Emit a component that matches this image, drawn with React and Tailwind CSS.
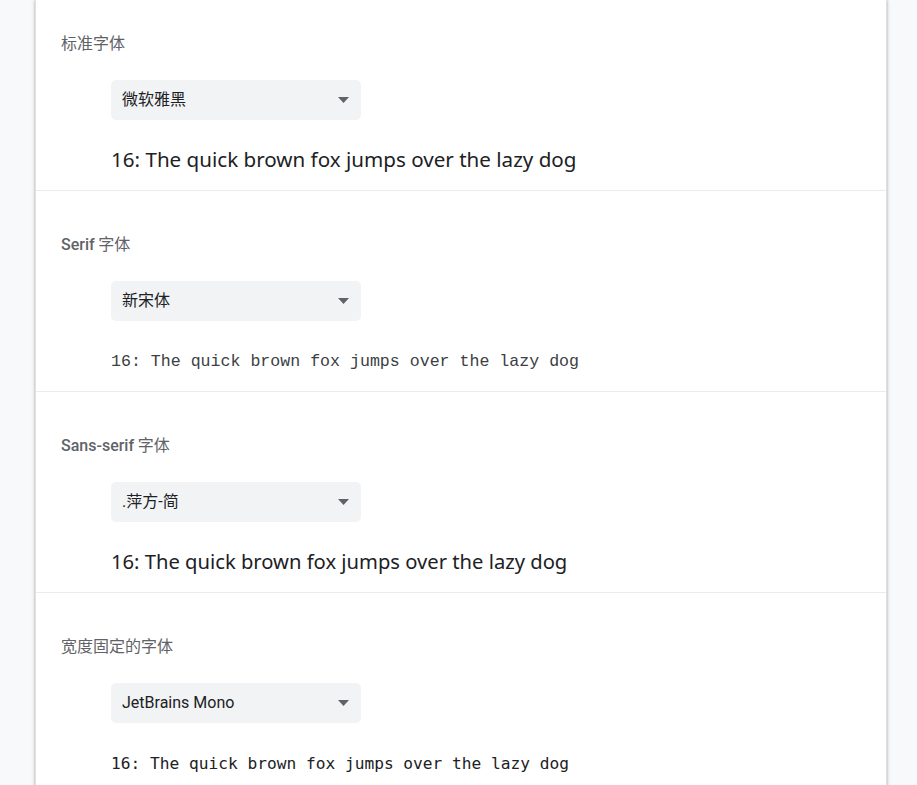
const fontRows = [
  {
    label: '标准字体',
    value: '微软雅黑',
    sampleClass: "mt-[27px] pb-[19px] font-['Noto_Sans','Noto_Sans_CJK_SC',sans-serif] text-[20.6px] text-[#202124]",
  },
  {
    label: 'Serif 字体',
    latin: 'Serif',
    value: '新宋体',
    sampleClass: "mt-[29px] pb-[17px] font-['Liberation_Mono','Noto_Sans_CJK_SC',monospace] text-[16.6px] text-[#3c4043]",
  },
  {
    label: 'Sans-serif 字体',
    latin: 'Sans-serif',
    value: '.萍方-简',
    sampleClass: "mt-[27px] pb-[19px] font-['Noto_Sans','Noto_Sans_CJK_SC',sans-serif] text-[20.2px] text-[#202124]",
  },
  {
    label: '宽度固定的字体',
    value: 'JetBrains Mono',
    sampleClass: "mt-[29px] pb-[17px] font-['DejaVu_Sans_Mono',monospace] text-[16.2px] text-[#202124]",
  },
];

function Label({ row }) {
  if (!row.latin) return <span>{row.label}</span>;
  return (
    <span>
      <span className="font-['Roboto',sans-serif] font-medium">{row.latin}</span>
      {row.label.slice(row.latin.length)}
    </span>
  );
}

function FontRow({ row, first }) {
  return (
    <section className={`${first ? 'pt-[32px]' : 'pt-[42px]'} border-b border-[#ebebeb]`}>
      <div className="pl-[25px] h-[20px] leading-[20px] text-[16px] text-[#5f6368]">
        <Label row={row} />
      </div>
      <div className="pl-[75px] mt-[28px]">
        <div className="w-[250px] h-[40px] rounded-[5px] bg-[#f1f3f4] flex items-center justify-between pl-[11px] pr-[12px]">
          <span className="text-[16px] text-[#202124] font-['Roboto','Noto_Sans_CJK_SC',sans-serif]">{row.value}</span>
          <svg width="11" height="6" viewBox="0 0 11 6">
            <path d="M0 0h11L5.5 6z" fill="#5f6368" />
          </svg>
        </div>
      </div>
      <div className={`pl-[75px] h-[24px] leading-[24px] whitespace-nowrap box-content ${row.sampleClass}`}>
        16: The quick brown fox jumps over the lazy dog
      </div>
    </section>
  );
}

export default function App() {
  return (
    <div className="min-h-screen bg-[#f8f9fa] font-['Noto_Sans_CJK_SC',sans-serif]">
      <div className="ml-[35px] w-[852px] min-h-[785px] bg-white border-x border-[#e0e0e0] shadow-[0_1px_2px_rgba(60,64,67,0.3),0_1px_3px_1px_rgba(60,64,67,0.15)]">
        {fontRows.map((row, i) => (
          <FontRow key={row.label} row={row} first={i === 0} />
        ))}
      </div>
    </div>
  );
}
